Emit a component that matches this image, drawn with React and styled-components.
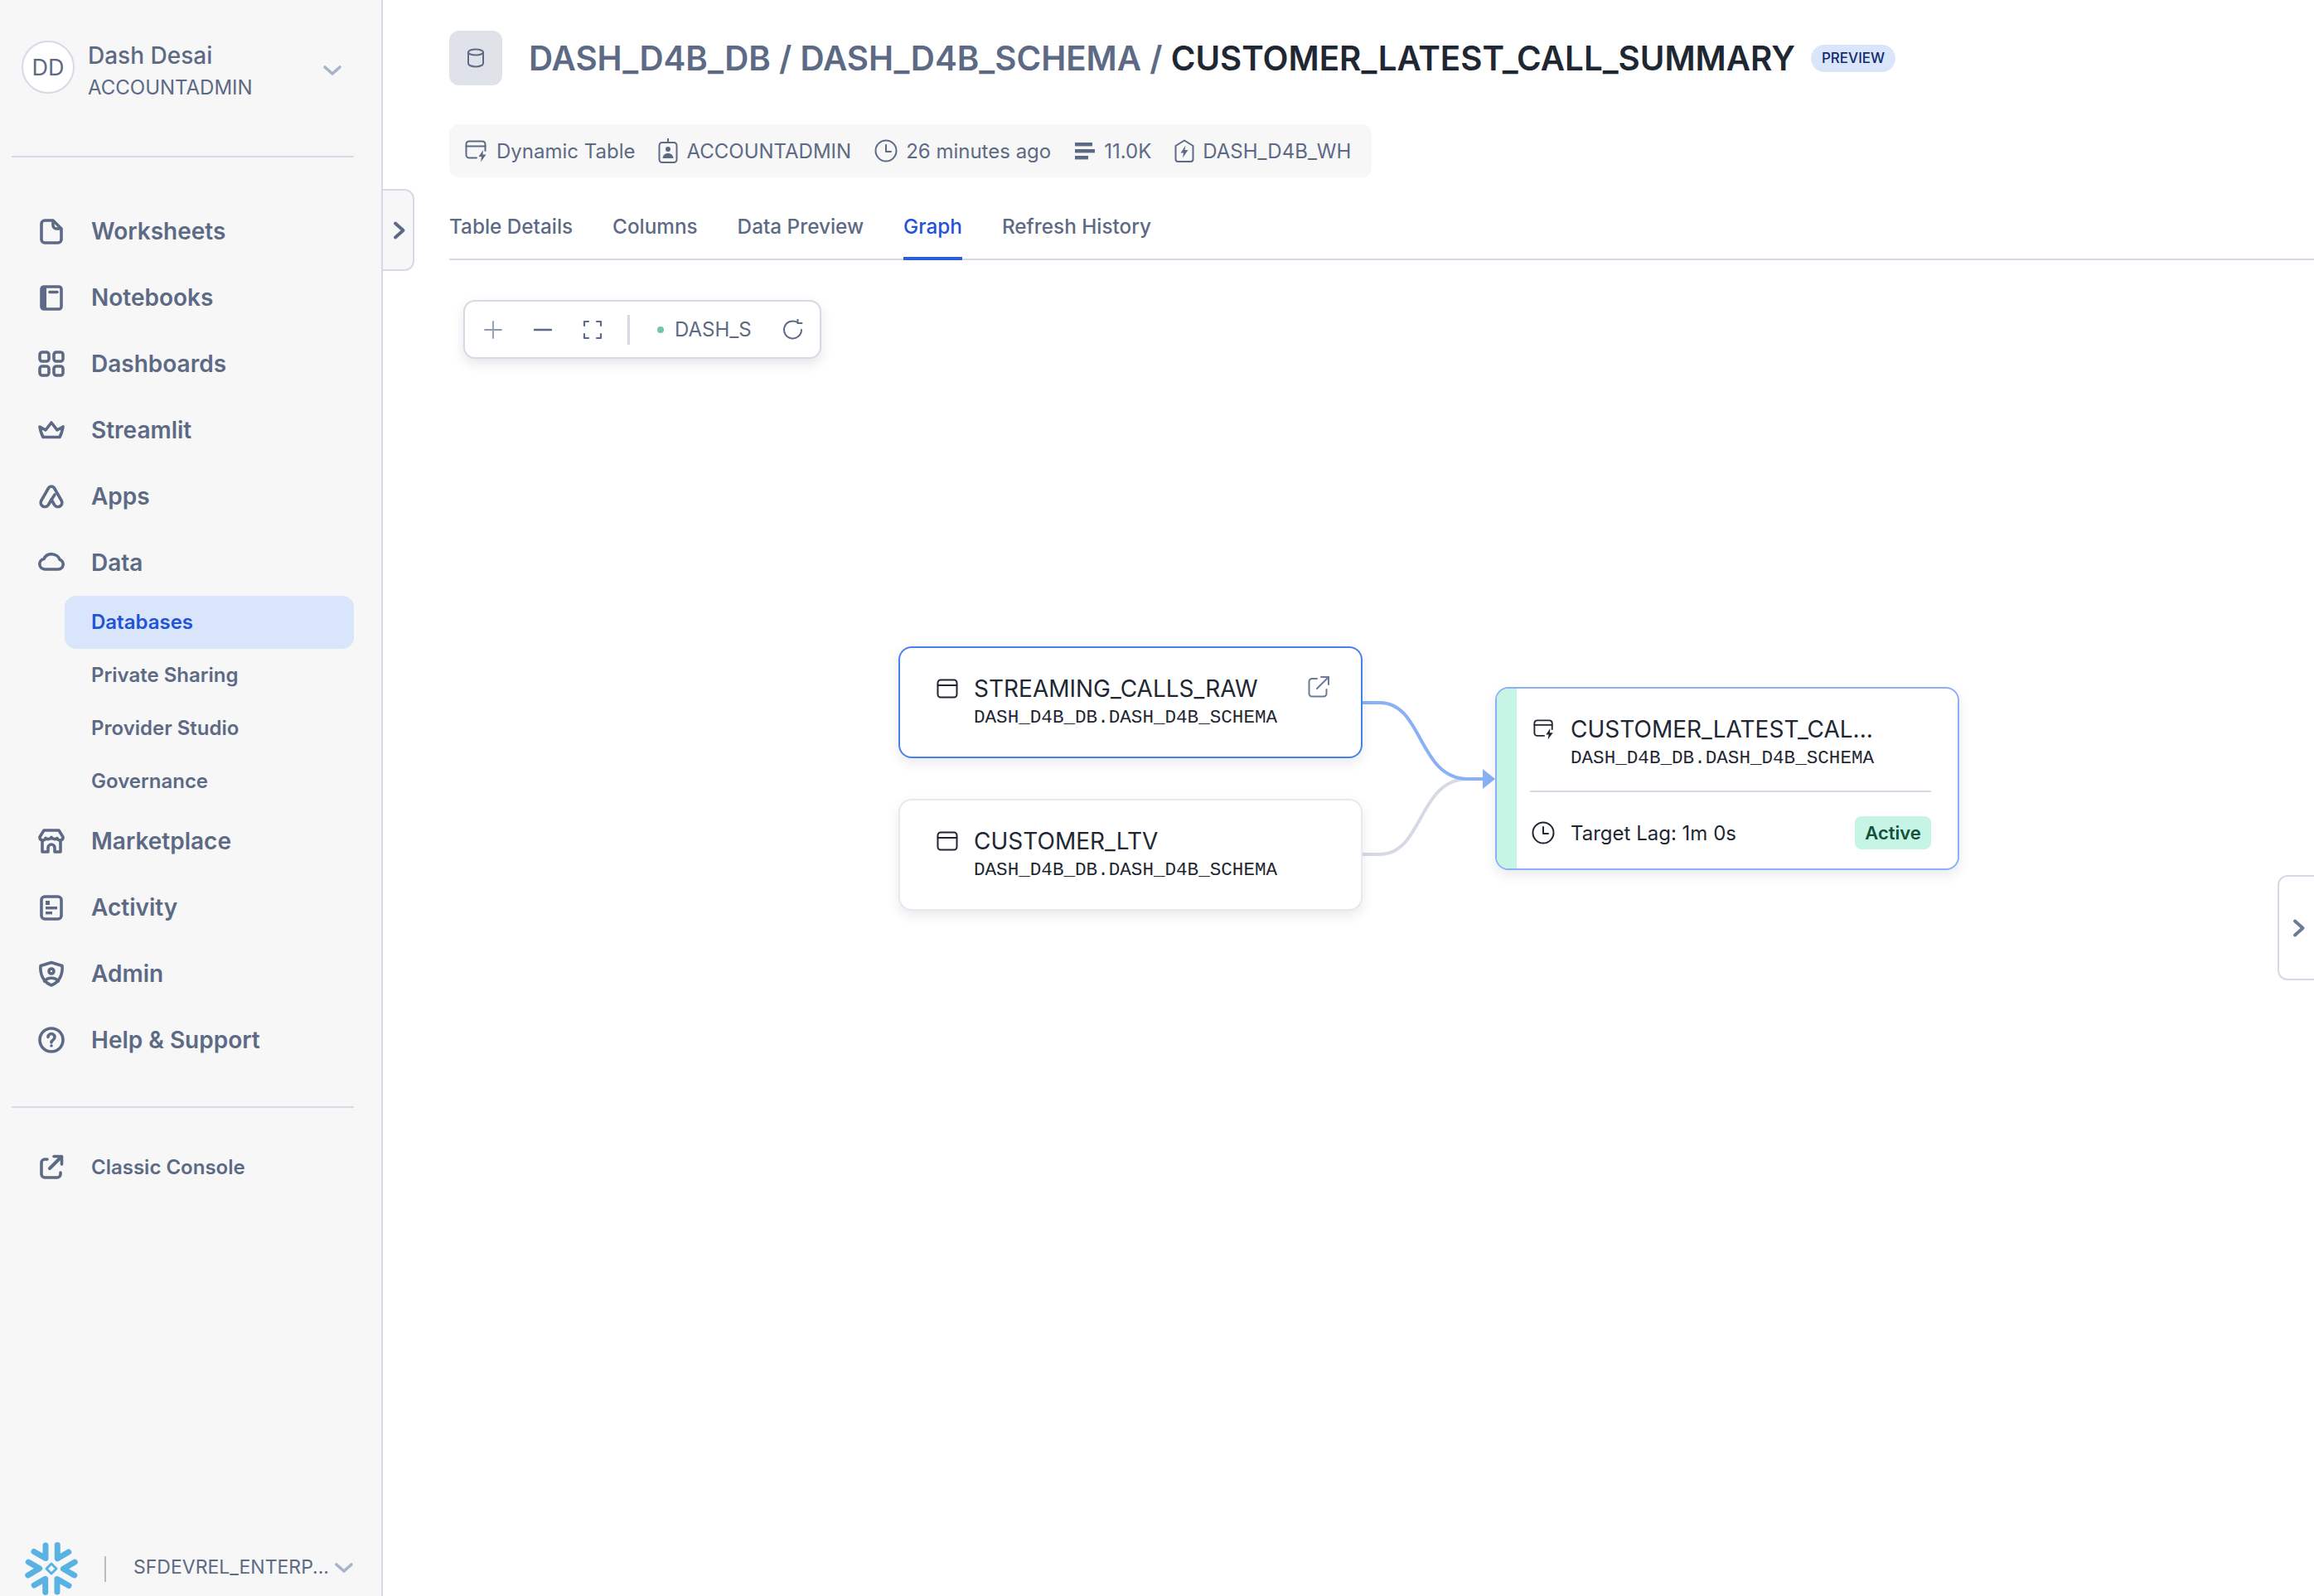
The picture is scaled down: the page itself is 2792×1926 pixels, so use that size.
import React from "react"
import styled, { createGlobalStyle } from "styled-components"

const GlobalStyle = createGlobalStyle`
  html, body {
    margin: 0;
    padding: 0;
    background: #fff;
    font-family: Inter, "Liberation Sans", sans-serif;
  }
  * { box-sizing: border-box; }
`

const Page = styled.div`
  display: flex;
  width: 100%;
  height: 1926px;
  overflow: hidden;
`

/* sidebar */
const Sidebar = styled.aside`
  position: relative;
  display: flex;
  flex-direction: column;
  flex: 0 0 462px;
  width: 462px;
  min-width: 0;
  height: 100%;
  padding: 0 33px 0 14px;
  background: #f7f7f7;
  border-right: 2px solid #d5dae4;
  color: #5d6a85;
`
const Profile = styled.div`
  display: flex;
  align-items: center;
  height: 188px;
  padding: 0 14px 26px 12px;
`
const Avatar = styled.div`
  display: flex;
  align-items: center;
  justify-content: center;
  flex: 0 0 64px;
  height: 64px;
  border-radius: 50%;
  background: #fff;
  border: 2px solid #d5dae4;
  font-size: 27px;
`
const ProfileText = styled.div`
  flex: 1;
  margin: 9px 0 0 16px;
`
const ProfileName = styled.div`
  font-size: 28px;
  line-height: 36px;
  font-weight: 500;
`
const ProfileRole = styled.div`
  font-size: 24px;
  line-height: 34px;
  margin-top: 4px;
`
const ProfileChevron = styled.div`
  margin-top: 10px;
`
const Rule = styled.div`
  flex: 0 0 2px;
  background: #d5dae4;
`
const Nav = styled.nav`
  margin: 49px 0 40px;
`
const NavItem = styled.div`
  display: flex;
  align-items: center;
  gap: 32px;
  height: 80px;
  padding-left: 32px;
  font-size: 28px;
  font-weight: 600;
`
const SubItem = styled.div`
  display: flex;
  align-items: center;
  height: 64px;
  margin-left: 64px;
  padding: 0 0 2px 32px;
  border-radius: 14px;
  font-size: 24px;
  font-weight: 600;
  background: ${(p) => (p.$active ? "#d9e5fb" : "transparent")};
  color: ${(p) => (p.$active ? "#1f53d8" : "inherit")};
`
const ConsoleLink = styled(NavItem)`
  height: 64px;
  margin-top: 40px;
  padding-bottom: 2px;
  font-size: 24px;
`
const AccountBar = styled.div`
  display: flex;
  align-items: center;
  margin-top: auto;
  height: 66px;
  padding-left: 16px;
`
const AccountSep = styled.div`
  flex: none;
  width: 2px;
  height: 31px;
  margin: 0 33px 0 32px;
  background: #bcbcbc;
`
const AccountName = styled.div`
  flex: 1;
  min-width: 0;
  font-size: 23px;
  white-space: nowrap;
  margin-top: -4px;
`
const SideToggle = styled.div`
  position: absolute;
  top: 228px;
  left: 462px;
  display: flex;
  align-items: center;
  justify-content: center;
  width: 38px;
  height: 99px;
  padding-left: 3px;
  background: #f7f7f7;
  border: 2px solid #d5dae4;
  border-left: none;
  border-radius: 0 12px 12px 0;
`
const RightToggle = styled.div`
  position: absolute;
  top: 1056px;
  right: 0;
  display: flex;
  align-items: center;
  justify-content: center;
  width: 44px;
  height: 127px;
  padding-left: 6px;
  background: #fff;
  border: 2px solid #d5dae4;
  border-right: none;
  border-radius: 12px 0 0 12px;
`

/* main */
const Main = styled.main`
  position: relative;
  display: flex;
  flex-direction: column;
  flex: 1;
  min-width: 0;
  padding: 37px 0 0 80px;
  color: #5d6a85;
`
const TitleRow = styled.div`
  display: flex;
  align-items: center;
  height: 66px;
`
const DbBox = styled.div`
  display: flex;
  align-items: center;
  justify-content: center;
  flex: 0 0 64px;
  height: 66px;
  margin-right: 32px;
  border-radius: 12px;
  background: #dfe2e9;
`
const Title = styled.h1`
  margin: 2px 0 0;
  font-size: 40.3px;
  line-height: 56px;
  font-weight: 600;
  white-space: nowrap;
  b { font-weight: 600; color: #1e2732; }
`
const PreviewPill = styled.span`
  display: flex;
  align-items: center;
  justify-content: center;
  width: 102px;
  height: 33px;
  margin-left: 19px;
  border-radius: 17px;
  background: #d9e5fb;
  color: #12296b;
  font-size: 17px;
  font-weight: 500;
`
const MetaBar = styled.div`
  display: flex;
  align-items: center;
  align-self: flex-start;
  gap: 28px;
  height: 64px;
  margin-top: 47px;
  padding: 0 25px 0 19px;
  border-radius: 12px;
  background: #f7f7f7;
  font-size: 24px;
`
const MetaItem = styled.div`
  display: flex;
  align-items: center;
  gap: 10px;
`
const Tabs = styled.div`
  display: flex;
  align-items: flex-end;
  gap: 48px;
  height: 100px;
  border-bottom: 2px solid #d5dae4;
`
const Tab = styled.div`
  display: flex;
  align-items: center;
  height: 84px;
  margin-bottom: -2px;
  padding-top: 6px;
  border-bottom: 4px solid ${(p) => (p.$active ? "#2b5fd9" : "transparent")};
  color: ${(p) => (p.$active ? "#1f53d8" : "inherit")};
  font-size: 24.3px;
  font-weight: 500;
`
const Canvas = styled.div`
  position: relative;
  flex: 1;
`
const Edges = styled.svg`
  position: absolute;
  inset: 0;
  width: 100%;
  height: 100%;
`
const Toolbar = styled.div`
  position: absolute;
  left: 17px;
  top: 48px;
  display: flex;
  align-items: center;
  width: 432px;
  height: 71px;
  padding-left: 22px;
  background: #fff;
  border: 2px solid #d5dae4;
  border-radius: 14px;
  box-shadow: 0 6px 14px rgba(40, 50, 80, 0.12);
`
const ToolGap = styled.span`
  flex: 0 0 ${(p) => p.$w}px;
`
const ToolSep = styled.div`
  width: 3px;
  height: 36px;
  background: #d5dae4;
`
const StatusDot = styled.span`
  flex: 0 0 8px;
  height: 8px;
  border-radius: 50%;
  background: #6fc9a2;
`
const ToolLabel = styled.span`
  flex: 0 0 93px;
  margin: 0 37px 0 13px;
  font-size: 24px;
`
const Node = styled.div`
  position: absolute;
  left: ${(p) => p.$x}px;
  top: ${(p) => p.$y}px;
  display: flex;
  width: 560px;
  height: ${(p) => p.$h}px;
  overflow: hidden;
  background: #fff;
  border: 2px solid ${(p) => p.$line};
  border-radius: 16px;
  color: #1e2732;
  box-shadow: 0 6px 14px rgba(40, 50, 80, 0.1);
`
const Strip = styled.div`
  flex: 0 0 24px;
  background: #c6f5e6;
`
const NodeBody = styled.div`
  position: relative;
  flex: 1;
  padding: ${(p) => (p.$dynamic ? "32px 32px 0 16px" : "32px 0 0 44px")};
`
const NodeHead = styled.div`
  display: grid;
  grid-template-columns: 26px 1fr;
  column-gap: 19px;
  padding-left: ${(p) => (p.$dynamic ? "4px" : "0")};
`
const NodeIcon = styled.div`
  display: flex;
  align-items: center;
  height: 34px;
`
const NodeTitle = styled.div`
  font-size: 28px;
  line-height: 34px;
  white-space: nowrap;
`
const NodeSub = styled.div`
  grid-column: 2;
  margin-top: 4px;
  font-family: "Liberation Mono", monospace;
  font-size: 22.6px;
  line-height: 28px;
  white-space: nowrap;
`
const NodeRule = styled.div`
  height: 2px;
  margin-top: 25px;
  background: #d5dae4;
`
const NodeFoot = styled.div`
  display: flex;
  align-items: center;
  gap: 19px;
  margin-top: 29px;
  height: 40px;
  padding-left: 2px;
  font-size: 24px;
`
const ActivePill = styled.span`
  display: flex;
  align-items: center;
  justify-content: center;
  width: 92px;
  height: 40px;
  margin-left: auto;
  border-radius: 8px;
  background: #c6f5e6;
  color: #14513d;
  font-size: 22px;
  font-weight: 600;
`
const OpenLink = styled.div`
  position: absolute;
  top: 34px;
  right: 38px;
  color: #6c7a96;
`
const Icon = styled.svg`
  display: block;
  flex: none;
  width: ${(p) => p.$size || 32}px;
  height: ${(p) => p.$h || p.$size || 32}px;
  fill: none;
  stroke: ${(p) => p.$color || "currentColor"};
  stroke-width: ${(p) => p.$sw || 3.6};
  stroke-linecap: round;
  stroke-linejoin: round;
  .solid { fill: ${(p) => p.$color || "currentColor"}; stroke: none; }
`

const navIcons = {
  file: <><path d="M8 3H18L28 13V26A4 4 0 0 1 24 30H8A4 4 0 0 1 4 26V7A4 4 0 0 1 8 3Z" /><path d="M18 3.5V9A4 4 0 0 0 22 13H27.5" /></>,
  book: <><rect x="4" y="3" width="24" height="27" rx="3" /><rect className="solid" x="4" y="3" width="6" height="27" /><path d="M14 9.5H23" /></>,
  grid: <><rect x="2" y="2" width="11" height="11" rx="3" /><rect x="19" y="2" width="11" height="11" rx="3" /><rect x="2" y="19" width="11" height="11" rx="3" /><rect x="19" y="19" width="11" height="11" rx="3" /></>,
  crown: <path d="M2 12L9 16L16 7L23 16L30 12C29 18 28 21 26 24.5H6C4 21 3 18 2 12Z" />,
  apps: <><path d="M12.5 6L3.6 21.5A5 5 0 0 0 12.2 26.5L16 20L19.8 26.5A5 5 0 0 0 28.4 21.5L19.5 6A4 4 0 0 0 12.5 6Z" /><path d="M16 20L20 14" /></>,
  cloud: <path d="M8 24H24.5A6 6 0 0 0 26 12.3A10 9 0 0 0 7 11.5A6.3 6.3 0 0 0 8 24Z" />,
  store: <><path d="M5 15V29H12V24A4 4 0 0 1 20 24V29H27V15" /><path d="M7 3H25L30 11A3.6 3.6 0 0 1 23 12.5A4.8 4.8 0 0 1 16 11.5A4.8 4.8 0 0 1 9 12.5A3.6 3.6 0 0 1 2 11Z" /></>,
  activity: <><rect x="4" y="3" width="24" height="27" rx="4" /><rect className="solid" x="9" y="8" width="5" height="5" /><rect className="solid" x="9" y="15" width="14" height="3.4" /><rect className="solid" x="9" y="21" width="8" height="3.4" /></>,
  shield: <><path d="M16 2.5L29 6.5C30 16 26 26 16 30C6 26 2 16 3 6.5Z" /><circle cx="16" cy="13" r="3" /><path d="M7.5 25C12 20 20 20 24.5 25" /></>,
  help: <><circle cx="16" cy="16" r="14" /><path d="M12 12.5A4 4 0 1 1 18 16C16.5 17 16 17.5 16 19" /><circle className="solid" cx="16" cy="23" r="1.8" /></>,
  external: <><path d="M11 7H8A4 4 0 0 0 4 11V25A4 4 0 0 0 8 29H23A4 4 0 0 0 27 25V23" /><path d="M14 18L26 6" strokeWidth="4" /><path d="M19 3.5H28.5V13" /></>,
}

const NavIcon = ({ name }) => <Icon viewBox="0 0 32 32">{navIcons[name]}</Icon>

const Chevron = ({ dir, color, size = 24 }) => (
  <Icon viewBox="0 0 24 24" $size={size} $color={color} $sw={dir === "right" ? 4 : 3.6}>
    <path d={dir === "right" ? "M7 3.500L16.500 12L7 20.500" : "M3 7L12 15L21 7"} />
  </Icon>
)

const TableIcon = () => (
  <Icon viewBox="0 0 26 26" $size={26} $sw={2}>
    <rect x="1.5" y="2.5" width="23" height="21" rx="3.5" />
    <path d="M1.5 9H24.5" />
  </Icon>
)

const DynamicIcon = ({ size = 28 }) => (
  <Icon viewBox="0 0 28 28" $size={size} $sw={2}>
    <path d="M14 22.5H5A3.5 3.5 0 0 1 1.5 19V6A3.5 3.5 0 0 1 5 2.5H21A3.5 3.5 0 0 1 24.5 6V14" />
    <path d="M1.5 8.5H24.5" />
    <path className="solid" d="M22 13L16.5 21H20L19 27.5L25.5 18.5H21.5Z" />
  </Icon>
)

const BadgeIcon = () => (
  <Icon viewBox="0 0 24 30" $size={24} $h={30} $sw={2}>
    <rect x="1.5" y="5" width="21" height="24" rx="3.5" />
    <path d="M12 0.5V5" />
    <circle className="solid" cx="12" cy="13" r="3" />
    <path className="solid" d="M5.5 24C6 19.5 9 18 12 18S18 19.5 18.500 24Z" />
  </Icon>
)

const ClockIcon = ({ size = 28 }) => (
  <Icon viewBox="0 0 28 28" $size={size} $sw={2}>
    <circle cx="14" cy="14" r="12.5" />
    <path d="M14 7V15H20" />
  </Icon>
)

const LinesIcon = () => (
  <Icon viewBox="0 0 26 26" $size={26}>
    <rect className="solid" x="1" y="3" width="21" height="4.400" />
    <rect className="solid" x="1" y="11" width="24" height="4.400" />
    <rect className="solid" x="1" y="19" width="16" height="4.400" />
  </Icon>
)

const WarehouseIcon = () => (
  <Icon viewBox="0 0 24 28" $size={24} $h={28} $sw={2}>
    <path d="M12 1.500L22.500 8V24A3 3 0 0 1 19.500 27H4.500A3 3 0 0 1 1.500 24V8Z" />
    <path className="solid" d="M13.500 7.500L7.500 16.500H11L10 22.500L16.500 13H12.500Z" />
  </Icon>
)

const DbIcon = () => (
  <Icon viewBox="0 0 24 24" $size={24} $sw={2}>
    <ellipse cx="12" cy="5" rx="9" ry="3.500" />
    <path d="M3 5V18.500C3 20.500 7 22.500 12 22.500S21 20.500 21 18.500V5" />
  </Icon>
)

const ExternalThin = () => (
  <Icon viewBox="0 0 26 26" $size={26} $sw={2}>
    <path d="M11 3H5A3.500 3.500 0 0 0 1.500 6.500V21A3.500 3.500 0 0 0 5 24.500H19A3.500 3.500 0 0 0 22.500 21V16" />
    <path d="M11 15L25 1" />
    <path d="M16 1H25V10" />
  </Icon>
)

const Snowflake = () => (
  <Icon viewBox="-32 -32 64 64" $size={64} $color="#58b3e4" $sw={7}>
    {[0, 60, 120, 180, 240, 300].map((deg) => (
      <path key={deg} transform={`rotate(${deg})`} d="M-7 -28V-12.500L-21 -20.500" />
    ))}
    <path d="M0 -6L6 0L0 6L-6 0Z" strokeWidth="3" />
  </Icon>
)

const mainNav = [
  ["Worksheets", "file"],
  ["Notebooks", "book"],
  ["Dashboards", "grid"],
  ["Streamlit", "crown"],
  ["Apps", "apps"],
  ["Data", "cloud"],
]
const subNav = ["Databases", "Private Sharing", "Provider Studio", "Governance"]
const lowerNav = [
  ["Marketplace", "store"],
  ["Activity", "activity"],
  ["Admin", "shield"],
  ["Help & Support", "help"],
]
const tabs = ["Table Details", "Columns", "Data Preview", "Graph", "Refresh History"]

const SCHEMA = "DASH_D4B_DB.DASH_D4B_SCHEMA"

export default function App() {
  return (
    <Page>
      <GlobalStyle />
      <Sidebar>
        <Profile>
          <Avatar>DD</Avatar>
          <ProfileText>
            <ProfileName>Dash Desai</ProfileName>
            <ProfileRole>ACCOUNTADMIN</ProfileRole>
          </ProfileText>
          <ProfileChevron><Chevron dir="down" color="#a8b2c8" /></ProfileChevron>
        </Profile>
        <Rule />
        <Nav>
          {mainNav.map(([label, icon]) => (
            <NavItem key={label}><NavIcon name={icon} />{label}</NavItem>
          ))}
          {subNav.map((label) => (
            <SubItem key={label} $active={label === "Databases"}>{label}</SubItem>
          ))}
          {lowerNav.map(([label, icon]) => (
            <NavItem key={label}><NavIcon name={icon} />{label}</NavItem>
          ))}
        </Nav>
        <Rule />
        <ConsoleLink><NavIcon name="external" />Classic Console</ConsoleLink>
        <AccountBar>
          <Snowflake />
          <AccountSep />
          <AccountName>SFDEVREL_ENTERP...</AccountName>
          <Chevron dir="down" color="#a8b2c8" />
        </AccountBar>
        <SideToggle><Chevron dir="right" /></SideToggle>
      </Sidebar>

      <Main>
        <TitleRow>
          <DbBox><DbIcon /></DbBox>
          <Title>DASH_D4B_DB / DASH_D4B_SCHEMA / <b>CUSTOMER_LATEST_CALL_SUMMARY</b></Title>
          <PreviewPill>PREVIEW</PreviewPill>
        </TitleRow>
        <MetaBar>
          <MetaItem><DynamicIcon />Dynamic Table</MetaItem>
          <MetaItem><BadgeIcon />ACCOUNTADMIN</MetaItem>
          <MetaItem><ClockIcon />26 minutes ago</MetaItem>
          <MetaItem><LinesIcon />11.0K</MetaItem>
          <MetaItem><WarehouseIcon />DASH_D4B_WH</MetaItem>
        </MetaBar>
        <Tabs>
          {tabs.map((label) => (
            <Tab key={label} $active={label === "Graph"}>{label}</Tab>
          ))}
        </Tabs>
        <Canvas>
          <Edges>
            <path d="M1101 717H1123C1175 717 1169 626 1229 626H1249" fill="none" stroke="#d5dae4" strokeWidth="4" />
            <path d="M1101 534H1123C1175 534 1169 626 1229 626H1249" fill="none" stroke="#8ab0f5" strokeWidth="4" />
            <path d="M1247 614L1262 626L1247 638Z" fill="#8ab0f5" />
          </Edges>
          <Toolbar>
            <Icon viewBox="0 0 24 24" $size={24} $color="#8d99ae" $sw={1.8}><path d="M12 2V22M2 12H22" /></Icon>
            <ToolGap $w={36} />
            <Icon viewBox="0 0 24 24" $size={24} $sw={2.400}><path d="M2 12H22" /></Icon>
            <ToolGap $w={36} />
            <Icon viewBox="0 0 24 24" $size={24} $sw={2.200}><path d="M7 2H2V7M17 2H22V7M2 17V22H7M22 17V22H17" /></Icon>
            <ToolGap $w={30} />
            <ToolSep />
            <ToolGap $w={33} />
            <StatusDot />
            <ToolLabel>DASH_S</ToolLabel>
            <Icon viewBox="0 0 26 26" $size={26} $sw={2}>
              <path d="M23 13A10.500 10.500 0 1 1 18 4" />
              <path d="M18.500 0.500V5H23.500" />
            </Icon>
          </Toolbar>

          <Node $x={542} $y={466} $h={135} $line="#4a80ea">
            <NodeBody>
              <NodeHead>
                <NodeIcon><TableIcon /></NodeIcon>
                <NodeTitle>STREAMING_CALLS_RAW</NodeTitle>
                <NodeSub>{SCHEMA}</NodeSub>
              </NodeHead>
              <OpenLink><ExternalThin /></OpenLink>
            </NodeBody>
          </Node>
          <Node $x={542} $y={650} $h={135} $line="#e8e9ef">
            <NodeBody>
              <NodeHead>
                <NodeIcon><TableIcon /></NodeIcon>
                <NodeTitle>CUSTOMER_LTV</NodeTitle>
                <NodeSub>{SCHEMA}</NodeSub>
              </NodeHead>
            </NodeBody>
          </Node>
          <Node $x={1262} $y={515} $h={221} $line="#8ab0f5">
            <Strip />
            <NodeBody $dynamic>
              <NodeHead $dynamic>
                <NodeIcon><DynamicIcon size={26} /></NodeIcon>
                <NodeTitle>CUSTOMER_LATEST_CAL...</NodeTitle>
                <NodeSub>{SCHEMA}</NodeSub>
              </NodeHead>
              <NodeRule />
              <NodeFoot>
                <ClockIcon />
                Target Lag: 1m 0s
                <ActivePill>Active</ActivePill>
              </NodeFoot>
            </NodeBody>
          </Node>
        </Canvas>
        <RightToggle><Chevron dir="right" color="#6c7a96" /></RightToggle>
      </Main>
    </Page>
  )
}
